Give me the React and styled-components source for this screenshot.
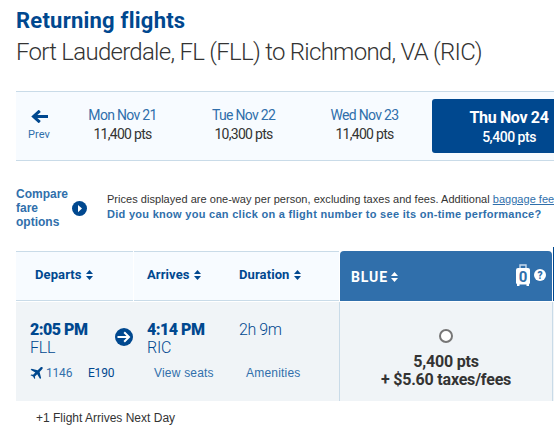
import React from 'react';
import styled, { createGlobalStyle, css } from 'styled-components';

const navy = '#00488f';
const blue = '#306fab';
const dark = '#333';
const line = '#c9dbe8';

const GlobalStyle = createGlobalStyle`
  body {
    margin: 0;
    background: #fff;
    overflow: hidden;
    color: ${dark};
    font-family: Roboto, 'Liberation Sans', sans-serif;
  }
`;

const Page = styled.div`
  width: 554px;
  height: 438px;
  box-sizing: border-box;
  padding: 6px 0 0 16px;
  overflow: hidden;
  white-space: nowrap;
`;

const Title = styled.h1`
  margin: 0;
  font-size: 22px;
  line-height: 29px;
  letter-spacing: 0.23px;
  color: ${navy};
`;

const Route = styled.h2`
  margin: 1px 0 23px;
  font-size: 24px;
  font-weight: 300;
  line-height: 32px;
  letter-spacing: -0.72px;
`;

const DateBar = styled.div`
  display: flex;
  align-items: flex-start;
  box-sizing: border-box;
  height: 70px;
  border-top: 1px solid ${line};
  border-bottom: 1px solid ${line};
  background: #f7fbff;
`;

const Prev = styled.a`
  display: flex;
  flex: none;
  flex-direction: column;
  align-items: center;
  width: 46px;
  padding-top: 18px;
  color: ${blue};
  font-size: 11px;
  line-height: 16px;
  letter-spacing: 0.1px;

  svg {
    margin-bottom: 4px;
  }
`;

const Day = styled.div`
  flex: none;
  width: 121px;
  padding-top: 14px;
  text-align: center;
  font-size: 14px;
  line-height: 19px;
  letter-spacing: -0.7px;

  ${props =>
    props.$selected &&
    css`
      width: 154px;
      height: 54px;
      box-sizing: border-box;
      margin: 7px 0 0 7px;
      padding-top: 9px;
      border-radius: 3px;
      background: ${navy};
      color: #fff;
      font-weight: 500;
      line-height: 18px;
      letter-spacing: -0.5px;
    `}
`;

const DayName = styled.div`
  color: ${props => (props.$selected ? '#fff' : blue)};

  ${props =>
    props.$selected &&
    css`
      font-size: 16px;
      font-weight: 700;
      line-height: 20px;
      letter-spacing: -0.35px;
    `}
`;

const Info = styled.div`
  display: flex;
  height: 60px;
  padding-top: 26px;
  font-family: 'Liberation Sans', Arial, sans-serif;
`;

const Compare = styled.a`
  display: flex;
  flex: none;
  gap: 4px;
  width: 91px;
  height: 42px;
  align-items: center;
  color: ${blue};
  font-size: 12px;
  font-weight: bold;
  line-height: 14px;

  span {
    width: 52px;
    white-space: normal;
  }
`;

const Notes = styled.div`
  flex: none;
  padding-top: 5px;
  font-size: 11px;
  line-height: 15px;
  letter-spacing: 0.03px;

  a {
    color: ${blue};
    text-decoration: underline;
  }
`;

const Tip = styled.div`
  color: ${blue};
  font-weight: bold;
  letter-spacing: 0.285px;
`;

const HeadRow = styled.div`
  display: grid;
  grid-template-columns: 117px 205px 212px 1px;
  column-gap: 1px;
  align-items: end;
  height: 54px;
  margin-bottom: 1px;
`;

const HeadCell = styled.div`
  display: flex;
  align-items: flex-start;
  box-sizing: border-box;
  height: 50px;
  padding: 14px 0 0 ${props => props.$indent}px;
  border-top: 1px solid ${line};
  border-bottom: 1px solid ${line};
  background: #f7fbff;
  color: ${navy};
`;

const Sortable = styled.div`
  display: flex;
  align-items: center;
  gap: 4px;
  width: ${props => (props.$width ? `${props.$width}px` : 'auto')};
  font-size: 13px;
  font-weight: 700;
  line-height: 18px;
  letter-spacing: 0.1px;
`;

const FareHead = styled.div`
  display: flex;
  align-items: center;
  box-sizing: border-box;
  height: 50px;
  padding: 0 6px 0 11px;
  border-radius: 4px 4px 0 0;
  background: ${blue};
  color: #fff;
`;

const FareName = styled(Sortable)`
  flex: 1;
  gap: 3px;
  padding-top: 2px;
  font-size: 14px;
  letter-spacing: 0.9px;
`;

const Bags = styled.div`
  display: flex;
  align-items: center;
  gap: 4px;
  padding-bottom: 2px;
`;

const NextFare = styled.div`
  height: 54px;
  background: ${navy};
`;

const FlightRow = styled.div`
  display: grid;
  grid-template-columns: 323px 214px 1px;
  height: 99px;
  background: #f0f4f7;
`;

const Flight = styled.div`
  padding: 18px 0 0 14px;
  color: ${navy};
`;

const Times = styled.div`
  display: flex;
  font-size: 16px;
  font-weight: 300;
  line-height: 18px;
  height: 45px;
`;

const Stop = styled.div`
  width: ${props => props.$width}px;
  letter-spacing: -0.2px;

  b {
    display: block;
    font-weight: 900;
    line-height: 19px;
    letter-spacing: -0.5px;
  }
`;

const Duration = styled.div`
  line-height: 19px;
  letter-spacing: -0.4px;
`;

const Leg = styled.div`
  width: 32px;
  padding-top: 8px;
`;

const Links = styled.div`
  display: flex;
  font-size: 12px;
  line-height: 16px;
`;

const LinkItem = styled.a`
  display: flex;
  align-items: center;
  gap: 3px;
  width: ${props => props.$width}px;
  color: ${props => (props.$dark ? navy : blue)};
  letter-spacing: ${props => (props.$plain ? 0.2 : -0.2)}px;
  font-family: ${props => (props.$plain ? "'Liberation Sans', Arial, sans-serif" : 'inherit')};
`;

const Fare = styled.label`
  display: flex;
  flex-direction: column;
  align-items: center;
  border-left: 1px solid ${line};
  border-right: 1px solid ${line};
  padding-top: 27px;
  font-size: 16px;
  font-weight: 700;
  line-height: 18px;
  letter-spacing: -0.2px;
`;

const Radio = styled.span`
  box-sizing: border-box;
  width: 14px;
  height: 14px;
  margin-bottom: 10px;
  border: 2px solid #767676;
  border-radius: 50%;
  background: #fff;
`;

const Footnote = styled.div`
  padding: 9px 0 0 20px;
  font: 12px/16px 'Liberation Sans', Arial, sans-serif;
`;

const SortIcon = () => (
  <svg width="7" height="10" viewBox="0 0 7 10" fill="currentColor">
    <path d="M3.5 0 7 4H0zM0 6h7L3.5 10z" />
  </svg>
);

const BackIcon = () => (
  <svg width="17" height="13" viewBox="0 0 17 13" fill="none" stroke={navy} strokeWidth="3">
    <path d="M17 6.5H3M8.8 .8 2.5 6.5l6.3 5.7" />
  </svg>
);

const PlayIcon = () => (
  <svg width="15" height="15" viewBox="0 0 15 15">
    <circle cx="7.5" cy="7.5" r="7.5" fill={navy} />
    <path d="M6 4v7.2l4-3.6z" fill="#fff" />
  </svg>
);

const LegIcon = () => (
  <svg width="18" height="18" viewBox="0 0 18 18">
    <circle cx="9" cy="9" r="9" fill={navy} />
    <path d="M2.5 9h11.5M9.2 4.2 14 9l-4.8 4.8" fill="none" stroke="#fff" strokeWidth="2" />
  </svg>
);

const PlaneIcon = () => (
  <svg width="13" height="12" viewBox="0 0 13 12" fill={navy}>
    <path d="M12.4.2c.7.7.3 1.6-.5 2.4L9.6 4.9l1.5 6-1 1.1-2.9-4.7-2.3 2.2.3 1.8-.7.7-1.4-2.5L.5 8.2l.8-.7 1.8.3 2.2-2.2L.6 2.8l1-1.1 6.1 1.5L10 .9c.8-.8 1.7-1.3 2.4-.7z" />
  </svg>
);

const BagIcon = () => (
  <svg width="14" height="22" viewBox="0 0 14 22">
    <path d="M4 5V1h6v4" fill="none" stroke="#c9dcee" strokeWidth="1.4" />
    <rect x="0" y="4" width="14" height="16.5" rx="2" fill="#fff" />
    <path d="M1 20h2.5v2H1zM10.5 20H13v2h-2.5z" fill="#fff" />
    <text x="7" y="18" textAnchor="middle" fontSize="15" fontWeight="700" fill={blue}>
      0
    </text>
  </svg>
);

const HelpIcon = () => (
  <svg width="12" height="12" viewBox="0 0 12 12">
    <circle cx="6" cy="6" r="6" fill="#fff" />
    <text x="6" y="9.5" textAnchor="middle" fontSize="10" fontWeight="900" fill={blue}>
      ?
    </text>
  </svg>
);

const days = [
  { name: 'Mon Nov 21', points: '11,400 pts' },
  { name: 'Tue Nov 22', points: '10,300 pts' },
  { name: 'Wed Nov 23', points: '11,400 pts' },
  { name: 'Thu Nov 24', points: '5,400 pts', selected: true }
];

const App = () => (
  <Page>
    <GlobalStyle />
    <Title>Returning flights</Title>
    <Route>Fort Lauderdale, FL (FLL) to Richmond, VA (RIC)</Route>

    <DateBar>
      <Prev>
        <BackIcon />
        Prev
      </Prev>
      {days.map(day => (
        <Day key={day.name} $selected={day.selected}>
          <DayName $selected={day.selected}>{day.name}</DayName>
          {day.points}
        </Day>
      ))}
    </DateBar>

    <Info>
      <Compare>
        <span>Compare fare options</span>
        <PlayIcon />
      </Compare>
      <Notes>
        Prices displayed are one-way per person, excluding taxes and fees. Additional{' '}
        <a>baggage fees</a>
        <Tip>Did you know you can click on a flight number to see its on-time performance?</Tip>
      </Notes>
    </Info>

    <HeadRow>
      <HeadCell $indent={19}>
        <Sortable>
          Departs <SortIcon />
        </Sortable>
      </HeadCell>
      <HeadCell $indent={13}>
        <Sortable $width={92}>
          Arrives <SortIcon />
        </Sortable>
        <Sortable>
          Duration <SortIcon />
        </Sortable>
      </HeadCell>
      <FareHead>
        <FareName>
          BLUE <SortIcon />
        </FareName>
        <Bags>
          <BagIcon />
          <HelpIcon />
        </Bags>
      </FareHead>
      <NextFare />
    </HeadRow>

    <FlightRow>
      <Flight>
        <Times>
          <Stop $width={85}>
            <b>2:05 PM</b>
            FLL
          </Stop>
          <Leg>
            <LegIcon />
          </Leg>
          <Stop $width={92}>
            <b>4:14 PM</b>
            RIC
          </Stop>
          <Duration>2h 9m</Duration>
        </Times>
        <Links>
          <LinkItem $width={58}>
            <PlaneIcon />
            1146
          </LinkItem>
          <LinkItem $width={66} $dark>
            E190
          </LinkItem>
          <LinkItem $width={92} $plain>
            View seats
          </LinkItem>
          <LinkItem $plain>Amenities</LinkItem>
        </Links>
      </Flight>
      <Fare>
        <Radio />
        <span>5,400 pts</span>
        <span>+ $5.60 taxes/fees</span>
      </Fare>
    </FlightRow>
    <Footnote>+1 Flight Arrives Next Day</Footnote>
  </Page>
);

export default App;
